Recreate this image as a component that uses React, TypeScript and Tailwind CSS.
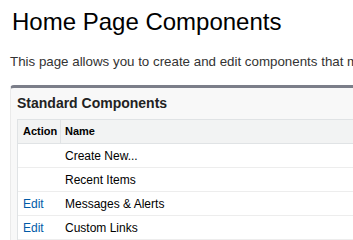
export default function App() {
  const rows = [
    { action: '', name: 'Create New...' },
    { action: '', name: 'Recent Items' },
    { action: 'Edit', name: 'Messages & Alerts' },
    { action: 'Edit', name: 'Custom Links' },
  ]

  return (
    <div className="w-[353px] h-[240px] overflow-hidden bg-white font-['Liberation_Sans',Arial,sans-serif]">
      {/* 页面标题 */}
      <h1 className="pl-[12px] pt-[8px] text-[24px] leading-[28px] text-black font-normal">
        Home Page Components
      </h1>
      <p className="pl-[10px] mt-[18px] text-[13.33px] leading-[16px] text-[#333] whitespace-nowrap overflow-hidden">
        This page allows you to create and edit components that may be shown on the home page.
      </p>

      {/* 标准组件面板 */}
      <div className="ml-[10px] mt-[15px] w-[420px] bg-[#f8f8f8] border-t-[3px] border-t-[#7b7e89] border-l border-l-[#eaeaea] rounded-tl-[4px]">
        <div className="h-[31px] pl-[6px] flex items-center">
          <h2 className="text-[14px] font-bold text-[#222]">Standard Components</h2>
        </div>
        <div className="ml-[6px] bg-white border-l border-t border-[#e0e3e5]">
          <div className="flex h-[24px] bg-[#f2f3f3] border-b border-[#e0e3e5] text-[11px] font-bold text-black">
            <div className="w-[43px] pl-[5px] flex items-center border-r border-[#e0e3e5]">Action</div>
            <div className="pl-[4px] flex items-center">Name</div>
          </div>
          {rows.map((row) => (
            <div key={row.name} className="flex h-[24px] border-b border-[#ededed] text-[12px]">
              <div className="w-[43px] pl-[5px] flex items-center text-[#015ba7]">{row.action}</div>
              <div className="pl-[4px] flex items-center text-black">{row.name}</div>
            </div>
          ))}
        </div>
      </div>
    </div>
  )
}
